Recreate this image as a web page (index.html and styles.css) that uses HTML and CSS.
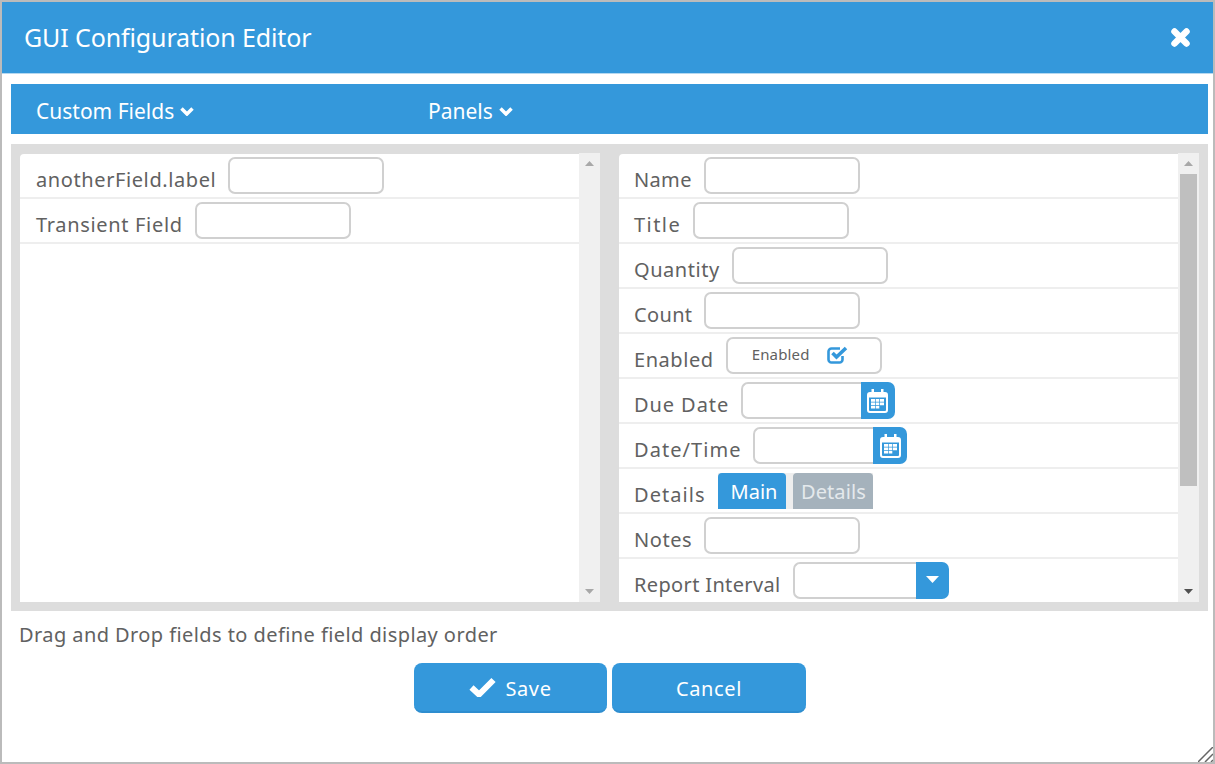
FILE: index.html
```html
<!DOCTYPE html>
<html lang="en">
<head>
<meta charset="utf-8">
<title>GUI Configuration Editor</title>
<link rel="stylesheet" href="styles.css">
</head>
<body>
<div class="window">
  <header class="titlebar">
    <h1 class="title">GUI Configuration Editor</h1>
    <svg class="close" viewBox="0 0 21 21"><path d="M4.500 4.500 16.500 16.500M16.500 4.500 4.500 16.500" fill="none" stroke="#fff" stroke-width="6.500" stroke-linecap="round"/></svg>
  </header>
  <nav class="toolbar">
    <div class="menu menu-fields">Custom Fields <svg class="chev" viewBox="0 0 14 10"><path d="M1.500 2.500 7 8l5.500-5.500" fill="none" stroke="#fff" stroke-width="3.500"/></svg></div>
    <div class="menu">Panels <svg class="chev" viewBox="0 0 14 10"><path d="M1.500 2.500 7 8l5.500-5.500" fill="none" stroke="#fff" stroke-width="3.500"/></svg></div>
  </nav>
  <section class="panes">
    <div class="pane pane-left">
      <div class="rows">
        <div class="row"><span class="label label-left">anotherField.label</span><span class="input"></span></div>
        <div class="row"><span class="label label-wide">Transient Field</span><span class="input"></span></div>
      </div>
      <div class="scrollbar">
        <svg class="arrow" viewBox="0 0 9 5"><path d="M4.500 0 9 5H0z" fill="#a8a8a8"/></svg>
        <div class="track"></div>
        <svg class="arrow" viewBox="0 0 9 5"><path d="M0 0h9L4.500 5z" fill="#a8a8a8"/></svg>
      </div>
    </div>
    <div class="pane">
      <div class="rows">
        <div class="row"><span class="label label-tight">Name</span><span class="input"></span></div>
        <div class="row"><span class="label label-widest">Title</span><span class="input"></span></div>
        <div class="row"><span class="label">Quantity</span><span class="input"></span></div>
        <div class="row"><span class="label label-tight">Count</span><span class="input"></span></div>
        <div class="row"><span class="label">Enabled</span>
          <span class="input check">Enabled
            <svg class="checkbox" viewBox="0 0 21 19"><path d="M15.500 11v3.500a3 3 0 0 1-3 3H4.500a3 3 0 0 1-3-3v-8a3 3 0 0 1 3-3H13" fill="none" stroke="#3498db" stroke-width="2.600"/><path d="M5.500 8l4 4L19 3" fill="none" stroke="#3498db" stroke-width="3.600"/></svg>
          </span>
        </div>
        <div class="row"><span class="label label-date">Due Date</span>
          <span class="group"><span class="input short"></span><span class="addon"><svg class="cal" viewBox="0 0 21 24"><path fill-rule="evenodd" d="M3 3h1.500V0h2.500v3h7V0h2.500v3H18a3 3 0 0 1 3 3v15a3 3 0 0 1-3 3H3a3 3 0 0 1-3-3V6a3 3 0 0 1 3-3zM2 8.500V21a1 1 0 0 0 1 1h15a1 1 0 0 0 1-1V8.500z" fill="#fff"/><path d="M4 10h4v2.700H4zm4.700 0h3.600v2.700H8.700zm4.300 0h4v2.700h-4zM4 13.500h4v2.700H4zm4.700 0h3.600v2.700H8.700zm4.300 0h4v2.700h-4zM4 17h4v2.500H4zm4.700 0h3.600v2.500H8.700z" fill="#fff"/></svg></span></span>
        </div>
        <div class="row"><span class="label label-wider">Date/Time</span>
          <span class="group"><span class="input short"></span><span class="addon"><svg class="cal" viewBox="0 0 21 24"><path fill-rule="evenodd" d="M3 3h1.500V0h2.500v3h7V0h2.500v3H18a3 3 0 0 1 3 3v15a3 3 0 0 1-3 3H3a3 3 0 0 1-3-3V6a3 3 0 0 1 3-3zM2 8.500V21a1 1 0 0 0 1 1h15a1 1 0 0 0 1-1V8.500z" fill="#fff"/><path d="M4 10h4v2.700H4zm4.700 0h3.600v2.700H8.700zm4.300 0h4v2.700h-4zM4 13.500h4v2.700H4zm4.700 0h3.600v2.700H8.700zm4.300 0h4v2.700h-4zM4 17h4v2.500H4zm4.700 0h3.600v2.500H8.700z" fill="#fff"/></svg></span></span>
        </div>
        <div class="row"><span class="label label-wider">Details</span>
          <span class="tabs"><span class="tab active">Main</span><span class="tab">Details</span></span>
        </div>
        <div class="row"><span class="label">Notes</span><span class="input"></span></div>
        <div class="row last"><span class="label label-tight">Report Interval</span>
          <span class="group"><span class="input select"></span><span class="addon drop"><svg class="caret" viewBox="0 0 13 7"><path d="M0 0h13L6.500 7z" fill="#fff"/></svg></span></span>
        </div>
      </div>
      <div class="scrollbar">
        <svg class="arrow" viewBox="0 0 9 5"><path d="M4.500 0 9 5H0z" fill="#a8a8a8"/></svg>
        <div class="track"><div class="thumb"></div></div>
        <svg class="arrow" viewBox="0 0 9 5"><path d="M0 0h9L4.500 5z" fill="#505050"/></svg>
      </div>
    </div>
  </section>
  <p class="hint">Drag and Drop fields to define field display order</p>
  <footer class="actions">
    <button class="btn" type="button"><svg class="tick" viewBox="0 0 27 20"><path d="M2.500 10.500 10 17.500 24.500 3" fill="none" stroke="#fff" stroke-width="6"/></svg>Save</button>
    <button class="btn" type="button">Cancel</button>
  </footer>
  <svg class="grip" viewBox="0 0 15 15"><path d="M0 15 15 0M7 15l8-8M13 15l2-2" stroke="#666" stroke-width="1.500" fill="none"/></svg>
</div>
</body>
</html>
```
FILE: styles.css
```css
* { box-sizing: border-box; }
html, body { margin: 0; height: 100%; }
body { font-family: "Noto Sans", "Open Sans", sans-serif; color: #616161; background: #fff; overflow: hidden; }
.window { position: relative; height: 764px; border: 2px solid #bbb; display: flex; flex-direction: column; background: #fff; }
.titlebar { flex: none; height: 72px; background: #3498db; border-bottom: 1px solid #b5d8f0; display: flex; align-items: center; justify-content: space-between; padding: 0 22px 2px; }
.title { margin: 0; font-size: 25px; font-weight: 400; color: #fff; letter-spacing: -.12px; }
.close { width: 21px; height: 21px; margin-top: 2px; }
.toolbar { flex: none; margin: 10px 5px 0 9px; height: 50px; background: #3498db; display: flex; align-items: center; padding: 3px 0 0 25px; color: #fff; font-size: 21px; }
.menu { display: flex; align-items: center; gap: 6px; }
.menu-fields { width: 392px; }
.chev { width: 14px; height: 10px; margin-top: 1px; }
.panes { flex: none; margin: 10px 5px 0 9px; height: 467px; background: #ddd; padding: 9px; display: flex; gap: 19px; }
.pane { flex: 1; display: flex; min-width: 0; }
.rows { flex: 1; min-width: 0; margin-top: 1px; overflow: hidden; background: #fff; border-radius: 4px 0 0 0; }
.row { height: 45px; border-bottom: 2px solid #eee; padding: 3px 0 0 15px; display: flex; align-items: flex-start; gap: 12px; }
.pane-left .row { padding-left: 16px; }
.row.last { border-bottom: 0; }
.label { font-size: 20px; line-height: 29px; padding-top: 8px; white-space: nowrap; letter-spacing: .55px; }
.label-left { letter-spacing: .6px; }
.label-tight { letter-spacing: .35px; }
.label-wide { letter-spacing: .67px; }
.label-date { letter-spacing: .92px; }
.label-wider { letter-spacing: 1.05px; }
.label-widest { letter-spacing: 1.45px; }
.input { display: block; width: 156px; height: 37px; border: 2px solid #d0d0d0; border-radius: 7px; background: #fff; flex: none; }
.check { display: flex; align-items: center; justify-content: center; gap: 17px; font-size: 15px; letter-spacing: .15px; padding: 0 8px 3px 0; }
.checkbox { width: 21px; height: 19px; }
.group { display: flex; }
.input.short { width: 119.5px; border-radius: 7px 0 0 7px; border-right: 0; }
.input.select { width: 123px; border-radius: 7px 0 0 7px; border-right: 0; }
.addon { width: 34.5px; height: 37px; background: #3498db; border-radius: 0 7px 7px 0; display: flex; align-items: center; justify-content: center; }
.addon.drop { width: 33px; }
.cal { width: 21px; height: 24px; }
.caret { width: 13px; height: 7px; margin-top: -3px; }
.tabs { display: flex; gap: 7px; background: #eee; height: 36px; margin-top: 1px; }
.tab { height: 36px; padding: 0 7.5px; background: #a5b2bc; color: #e4e9ec; font-size: 20px; line-height: 37px; letter-spacing: .1px; border-radius: 4px 4px 0 0; }
.tab.active { background: #3498db; color: #fff; padding: 0 9px 0 13px; letter-spacing: 0; }
.scrollbar { flex: none; width: 21px; background: #f0f0f0; display: flex; flex-direction: column; align-items: center; }
.arrow { flex: none; width: 9px; height: 5px; margin: 8px 0; }
.track { flex: 1; width: 100%; padding: 0 2px; }
.thumb { height: 312px; background: #bfbfbf; }
.hint { flex: none; margin: 11px 0 0 17px; font-size: 20px; line-height: 26px; letter-spacing: .42px; }
.actions { flex: none; margin-top: 15px; display: flex; justify-content: center; gap: 5px; padding-left: 5px; }
.btn { width: 193px; height: 50px; border: 0; border-bottom: 2px solid #2e8dcf; border-radius: 8px; background: #3498db; color: #fff; font: 400 20px "Noto Sans", sans-serif; letter-spacing: .6px; display: flex; align-items: center; justify-content: center; gap: 9px; padding: 2px 0 0; }
.btn:last-child { width: 194px; }
.tick { width: 27px; height: 20px; margin-top: -3px; }
.grip { position: absolute; right: 0; bottom: 0; width: 15px; height: 15px; }
```
